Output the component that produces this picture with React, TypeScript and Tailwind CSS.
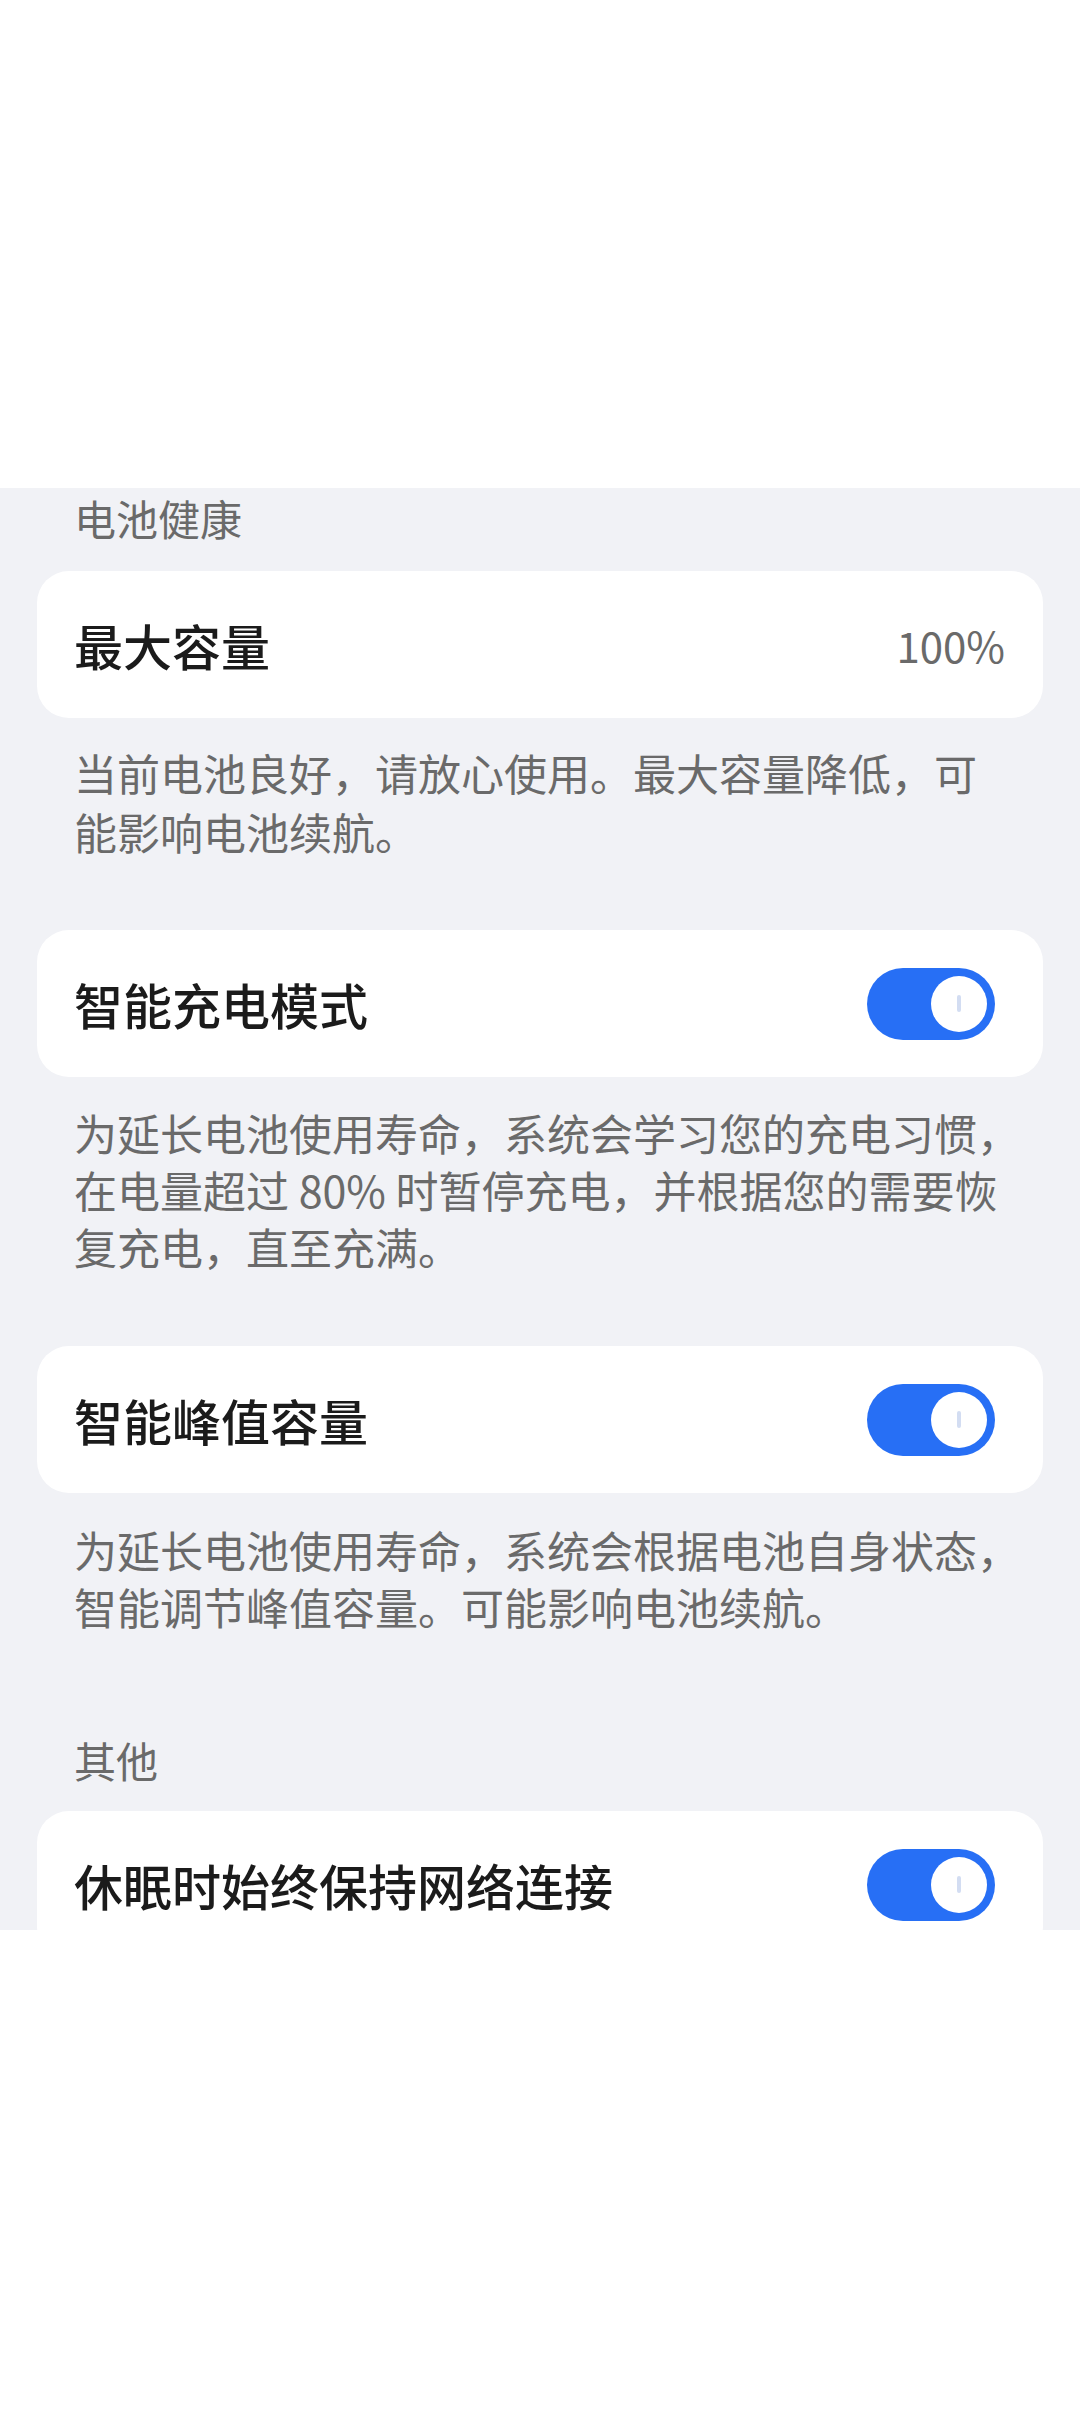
const font = { fontFamily: '"Noto Sans CJK SC", "Noto Sans", sans-serif' };

function Toggle() {
  return (
    <div className="w-[128px] h-[72px] rounded-full bg-[#276ff5] flex items-center justify-end pr-[8px] shrink-0">
      <div className="w-[56px] h-[56px] rounded-full bg-white flex items-center justify-center">
        <div className="w-[4px] h-[17px] rounded-full bg-[#d3ddf2]" />
      </div>
    </div>
  );
}

function Card({ title, right }: { title: string; right: React.ReactNode }) {
  return (
    <div className="mx-[37px] h-[147px] rounded-[32px] bg-white flex items-center justify-between pl-[37px] pr-[48px]">
      <span className="text-[49px] font-medium text-[#1b1b1b] leading-none">{title}</span>
      {right}
    </div>
  );
}

export default function App() {
  return (
    <div className="w-[1080px] h-[2420px] bg-white flex flex-col" style={font}>
      <div className="h-[488px] shrink-0" />
      <div className="h-[1442px] shrink-0 bg-[#f1f2f6] overflow-hidden">
        <div className="pl-[74px] h-[60px] leading-[60px] text-[42px] text-[#6a6a6a]">电池健康</div>

        <div className="mt-[23px]">
          <Card
            title="最大容量"
            right={<span className="text-[42px] text-[#6a6a6a] leading-none -mr-[10px]">100%</span>}
          />
        </div>
        <p className="mt-[25px] px-[74px] text-[43px] leading-[59px] text-[#6a6a6a]">
          当前电池良好，请放心使用。最大容量降低，可<br />
          能影响电池续航。
        </p>

        <div className="mt-[69px]">
          <Card title="智能充电模式" right={<Toggle />} />
        </div>
        <p className="mt-[27px] px-[74px] text-[43px] leading-[57px] text-[#6a6a6a] whitespace-nowrap">
          为延长电池使用寿命，系统会学习您的充电习惯，<br />
          在电量超过 80% 时暂停充电，并根据您的需要恢<br />
          复充电，直至充满。
        </p>

        <div className="mt-[71px]">
          <Card title="智能峰值容量" right={<Toggle />} />
        </div>
        <p className="mt-[28px] px-[74px] text-[43px] leading-[57px] text-[#6a6a6a] whitespace-nowrap">
          为延长电池使用寿命，系统会根据电池自身状态，<br />
          智能调节峰值容量。可能影响电池续航。
        </p>

        <div className="mt-[95px] pl-[74px] h-[60px] leading-[60px] text-[42px] text-[#6a6a6a]">其他</div>
        <div className="mt-[21px]">
          <Card title="休眠时始终保持网络连接" right={<Toggle />} />
        </div>
      </div>
      <div className="flex-1" />
    </div>
  );
}
